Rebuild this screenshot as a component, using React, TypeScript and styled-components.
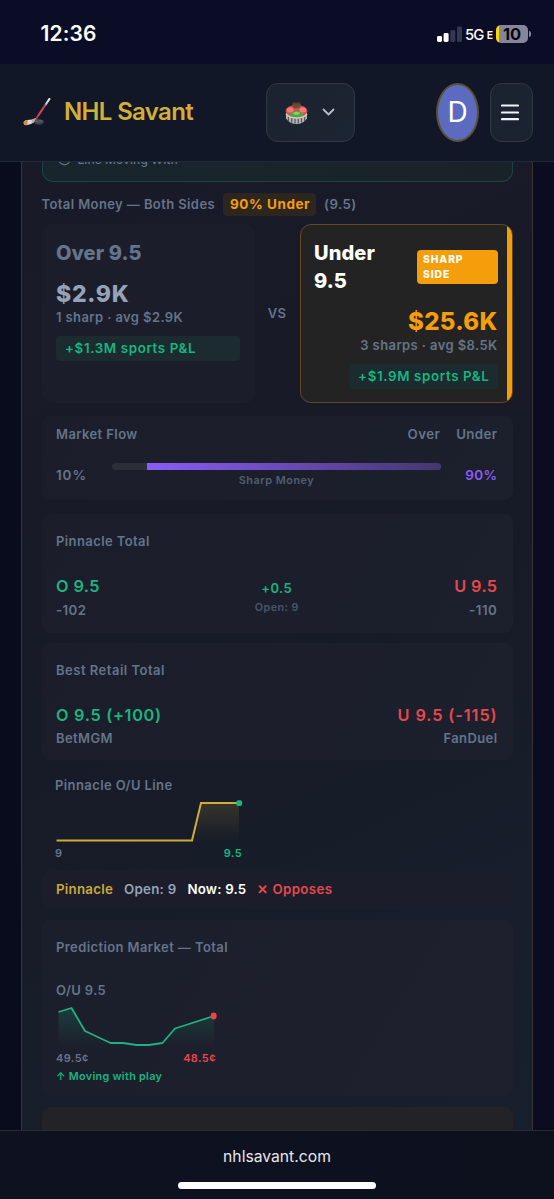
import React from "react";
import styled, { createGlobalStyle } from "styled-components";

const GlobalStyle = createGlobalStyle`
  * { box-sizing: border-box; }
  body {
    margin: 0;
    background: #090c1d;
    font-family: Inter, "Liberation Sans", sans-serif;
    color: #64748b;
  }
`;

const Screen = styled.div`
  width: 554px;
  height: 1199px;
  display: flex;
  flex-direction: column;
  overflow: hidden;
`;

const StatusBar = styled.div`
  height: 64px;
  flex: none;
  display: flex;
  justify-content: space-between;
  padding: 22px 23px 0 40.5px;
  background: #0a0d25;
`;

const StatusGroup = styled.div`
  display: flex;
  height: 24px;
  align-items: center;
`;

const Header = styled.header`
  height: 97.5px;
  flex: none;
  display: flex;
  align-items: center;
  padding: 0 21px 0 23px;
  background: #111726;
  border-bottom: 1px solid #222a38;
`;

const SportPicker = styled.button`
  width: 89px;
  height: 59px;
  margin: 0 81.5px 0 auto;
  padding: 3px 19px 0 18px;
  display: flex;
  align-items: center;
  justify-content: space-between;
  border: 1px solid #313845;
  border-radius: 12px;
  background: linear-gradient(135deg, #1b2230, #1c2533);
`;

const Avatar = styled.div`
  width: 43px;
  height: 59px;
  margin-right: 11px;
  display: flex;
  align-items: center;
  justify-content: center;
  border: 2px solid #5b5033;
  border-radius: 50%;
  background: #5c6bc0;
`;

const MenuButton = styled.button`
  width: 43px;
  height: 59px;
  padding: 0 3px 0 0;
  display: flex;
  align-items: center;
  justify-content: center;
  border: 1px solid #313845;
  border-radius: 12px;
  background: #1b2330;
`;

const Viewport = styled.main`
  height: 968px;
  flex: none;
  overflow: hidden;
  padding: 0 21px;
  background: linear-gradient(90deg, #090c1c, #0b0c20);
`;

const GameCard = styled.section`
  height: 1000px;
  padding: 0 19.5px;
  border: solid #3a362f;
  border-width: 0 1px;
  background: linear-gradient(155deg, #191a27, #171b27 50%, #18202d);
`;

const SignalBox = styled.div`
  height: 20px;
  padding-left: 15px;
  display: flex;
  align-items: flex-start;
  gap: 7px;
  overflow: hidden;
  border: 1px solid #1a4344;
  border-top: 0;
  border-radius: 0 0 11px 11px;
  background: linear-gradient(90deg, #18252d, #1a2229);
`;

const SignalIcon = styled.svg`
  flex: none;
  margin-top: -9px;
`;

const SignalText = styled.span`
  margin-top: -11px;
  font-size: 12px;
  line-height: 18px;
  font-weight: 500;
  letter-spacing: 0.05px;
`;

interface TextProps {
  $size?: number;
  $line?: number;
  $weight?: number;
  $color?: string;
  $track?: number;
  $top?: number;
}

const Text = styled.div<TextProps>`
  font-size: ${(p) => p.$size ?? 13}px;
  line-height: ${(p) => p.$line ?? 20}px;
  font-weight: ${(p) => p.$weight ?? 580};
  color: ${(p) => p.$color ?? "#64748b"};
  letter-spacing: ${(p) => p.$track ?? 0.4}px;
  margin-top: ${(p) => p.$top ?? 0}px;
  white-space: nowrap;
`;

const MoneyRow = styled.div`
  height: 23px;
  margin-top: 11px;
  display: flex;
  align-items: center;
`;

const ShareBadge = styled.span`
  height: 23px;
  margin: 0 8px;
  padding: 0 6px 0 7px;
  border-radius: 4px;
  background: #2d261f;
  color: #f59e0b;
  font-size: 13.5px;
  line-height: 22px;
  font-weight: 700;
  letter-spacing: 0.55px;
`;

const Versus = styled.div`
  height: 179px;
  margin-top: 8px;
  display: grid;
  grid-template-columns: 213px 1fr 213px;
`;

const VersusMark = styled.div`
  display: flex;
  align-items: center;
  justify-content: center;
  padding-bottom: 1px;
`;

const Side = styled.div<{ $sharp?: boolean }>`
  overflow: hidden;
  padding: 14px 14px 0 13.5px;
  display: flex;
  flex-direction: column;
  align-items: ${(p) => (p.$sharp ? "flex-end" : "stretch")};
  border: 1px solid ${(p) => (p.$sharp ? "#644820" : "#1c1f2b")};
  border-radius: 11px;
  background: ${(p) =>
    p.$sharp ? "linear-gradient(90deg, #242324 97.8%, #f59e0b 97.8%)" : "#1b1e2a"};
`;

const SideTop = styled.div`
  width: 100%;
  display: flex;
  align-items: center;
  justify-content: space-between;
`;

const SideName = styled.div<{ $color: string; $width?: number }>`
  width: ${(p) => (p.$width ? `${p.$width}px` : "auto")};
  font-size: 20px;
  line-height: 28.4px;
  font-weight: 800;
  letter-spacing: 0.1px;
  color: ${(p) => p.$color};
`;

const SharpTag = styled.div`
  width: 81px;
  height: 34px;
  padding: 2px 20px 2px 6.5px;
  border-radius: 4px;
  background: #f59e0b;
  color: #fff;
  font-size: 10.3px;
  line-height: 15px;
  font-weight: 800;
  letter-spacing: 0.9px;
`;

const Profit = styled.div`
  height: 25px;
  margin-top: 8.5px;
  padding: 0 8px 0 9px;
  border-radius: 4px;
  background: #1b2b30;
  color: #18b581;
  font-size: 13.3px;
  line-height: 25px;
  font-weight: 600;
  letter-spacing: 0.65px;
  white-space: nowrap;
`;

const Panel = styled.div<{ $height: number; $top: number; $pad?: number; $bg?: string }>`
  height: ${(p) => p.$height}px;
  margin-top: ${(p) => p.$top}px;
  padding: ${(p) => p.$pad ?? 17}px 15px 0 14.5px;
  border-radius: 9px;
  background: ${(p) => p.$bg ?? "linear-gradient(120deg, #1b1e2a, #1c202c)"};
`;

const Spread = styled.div<{ $top?: number }>`
  margin-top: ${(p) => p.$top ?? 0}px;
  display: flex;
  justify-content: space-between;
  align-items: flex-start;
`;

const Legend = styled.div`
  display: flex;
  gap: 16px;
`;

const FlowRow = styled.div`
  margin-top: 19px;
  display: grid;
  grid-template-columns: 56px 329px 1fr;
`;

const FlowTrack = styled.div`
  height: 7px;
  overflow: hidden;
  border-radius: 4px;
  background: #2c2f39;
`;

const FlowFill = styled.div`
  height: 100%;
  margin-left: 35px;
  background: linear-gradient(90deg, #8b5cf6, #43376f);
`;

const Quote = styled.div<{ $align: string }>`
  width: 33%;
  text-align: ${(p) => p.$align};
`;

const LineBlock = styled.div`
  height: 111px;
  padding: 15px 13.5px 0;
`;

const Chart = styled.svg`
  display: block;
  overflow: visible;
`;

const ChartLabels = styled.div<{ $width: number }>`
  width: ${(p) => p.$width}px;
  display: flex;
  justify-content: space-between;
`;

const Strip = styled.div`
  height: 37px;
  padding: 0 15px 1px 14.5px;
  display: flex;
  align-items: center;
  gap: 11px;
  border-radius: 9px;
  background: #1b1e2a;
`;

const BottomBar = styled.footer`
  height: 69.5px;
  flex: none;
  display: flex;
  flex-direction: column;
  align-items: center;
  border-top: 1px solid #262b35;
  background: linear-gradient(90deg, #0e1120, #0d111e);
`;

const HomeIndicator = styled.div`
  width: 198px;
  height: 7px;
  margin-top: 13px;
  border-radius: 4px;
  background: #fff;
`;

const SignalBars = () => (
  <svg width="26" height="16" viewBox="0 0 26 16">
    <rect x="0" y="10" width="5" height="6" rx="1.4" fill="#fff" />
    <rect x="6.6" y="7" width="5" height="9" rx="1.4" fill="#fff" />
    <rect x="13.3" y="4" width="5" height="12" rx="1.4" fill="#343750" />
    <rect x="20" y="0.5" width="5" height="15.5" rx="1.4" fill="#343750" />
  </svg>
);

const BatteryWrap = styled.div`
  display: flex;
  align-items: center;
  gap: 1px;
  margin-left: 3px;
`;

const BatteryBody = styled.div`
  width: 32px;
  height: 18px;
  border-radius: 5px;
  background: linear-gradient(90deg, #fbd906 3.5px, #85869a 3.5px);
  color: #05060c;
  font-size: 16.5px;
  line-height: 18px;
  font-weight: 700;
  text-align: center;
`;

const BatteryTip = styled.div`
  width: 2px;
  height: 6px;
  border-radius: 0 3px 3px 0;
  background: #85869a;
`;

const StickIcon = () => (
  <svg width="28" height="29" viewBox="0 0 28 29">
    <defs>
      <linearGradient id="shaft" x1="1" y1="0" x2="0" y2="1">
        <stop offset="0" stopColor="#e9e9ee" />
        <stop offset="0.24" stopColor="#c8c8cf" />
        <stop offset="0.32" stopColor="#b84653" />
        <stop offset="0.7" stopColor="#cf4a50" />
        <stop offset="1" stopColor="#8f3d3b" />
      </linearGradient>
    </defs>
    <ellipse cx="16" cy="24" rx="4.6" ry="2.7" fill="#3c4047" />
    <ellipse cx="16" cy="23.1" rx="4.4" ry="1.7" fill="#50555d" />
    <path d="M26.4 1 L12.6 21.5" stroke="url(#shaft)" strokeWidth="2.2" strokeLinecap="round" />
    <path
      d="M12.7 20.2 L11 24.2 Q6 27.8 2 27 Q0 26.1 1 23.3 Q3 21.6 9.4 21.6 Z"
      fill="#dedbd9"
    />
    <path d="M5 22 Q0.6 22.3 0.5 25.1 Q0.8 27.2 4.2 27 Z" fill="#d28a45" />
    <path d="M9 21.6 L12.8 20.1 L11.2 24.1 L8.5 25.7 Z" fill="#b9aaa6" />
  </svg>
);

const StadiumIcon = () => (
  <svg width="23" height="23" viewBox="0 0 23 23">
    <rect x="7.6" y="0.6" width="7.8" height="5" rx="1" fill="#56412f" />
    <path d="M1 9 V16.5 Q5 22 11.5 22 Q18 22 22 16.5 V9 Z" fill="#b5b3b2" />
    <ellipse cx="11.5" cy="9.1" rx="11" ry="6.1" fill="#d84f50" />
    <ellipse cx="5.3" cy="8" rx="3.4" ry="2.8" fill="#ef7a78" />
    <ellipse cx="17.7" cy="8" rx="3.4" ry="2.8" fill="#ef7a78" />
    <path d="M7 2.6 H16 L14.7 6.3 H8.3 Z" fill="#6d4d38" />
    <ellipse cx="11.5" cy="12.2" rx="6.6" ry="3.1" fill="#55a345" />
    <ellipse cx="11.5" cy="11.3" rx="3.2" ry="1.5" fill="#8ed057" />
    <path
      d="M3.4 14.7 V19 M6.7 16 V20.8 M10 16.5 V21.6 M13.3 16.5 V21.6 M16.5 16 V20.8 M19.7 14.7 V19"
      stroke="#55575d"
      strokeWidth="1.2"
    />
    <path d="M0.8 12 Q4 16 11.5 16 Q19 16 22.2 12" fill="none" stroke="#d5d2d0" strokeWidth="1.2" />
  </svg>
);

const Chevron = styled.svg`
  margin-bottom: 4px;
`;

const Network = styled(Text)`
  margin-left: 2px;
`;

const NetworkSuffix = styled(Text)`
  margin-left: 3.5px;
`;

const Brand = styled(Text)`
  margin-left: 13px;
`;

const FlowCaption = styled(Text)`
  text-align: center;
`;

const FlowEnd = styled(Text)`
  text-align: right;
`;

const GREEN = "#18b581";
const RED = "#e5484d";
const GOLD = "#d4af37";

export default function App() {
  return (
    <>
      <GlobalStyle />
      <Screen>
        <StatusBar>
          <StatusGroup>
            <Text $size={21} $line={24} $weight={600} $color="#fff" $track={0.1}>
              12:36
            </Text>
          </StatusGroup>
          <StatusGroup>
            <SignalBars />
            <Network $size={14.8} $line={24} $weight={550} $color="#fff" $track={-0.9} $top={1}>
              5G
            </Network>
            <NetworkSuffix $size={10.5} $line={24} $weight={600} $color="#fff" $track={-0.2} $top={4}>
              E
            </NetworkSuffix>
            <BatteryWrap>
              <BatteryBody>10</BatteryBody>
              <BatteryTip />
            </BatteryWrap>
          </StatusGroup>
        </StatusBar>

        <Header>
          <StickIcon />
          <Brand $size={24} $line={30} $weight={640} $color={GOLD} $track={-0.65}>
            NHL Savant
          </Brand>
          <SportPicker>
            <StadiumIcon />
            <Chevron width="13" height="8" viewBox="0 0 13 8">
              <path d="M1.5 1.5 L6.5 6.5 L11.5 1.5" fill="none" stroke="#b6bcc8" strokeWidth="1.8" strokeLinecap="round" strokeLinejoin="round" />
            </Chevron>
          </SportPicker>
          <Avatar>
            <Text $size={28} $line={32} $weight={400} $color="#fff" $track={0}>
              D
            </Text>
          </Avatar>
          <MenuButton>
            <svg width="18" height="17" viewBox="0 0 18 17">
              <path d="M1 1.5 H17 M1 8.5 H17 M1 15.2 H17" stroke="#f1f5f9" strokeWidth="2.2" strokeLinecap="round" />
            </svg>
          </MenuButton>
        </Header>

        <Viewport>
          <GameCard>
            <SignalBox>
              <SignalIcon width="13" height="13" viewBox="0 0 13 13">
                <circle cx="6.5" cy="6.2" r="5.6" fill="none" stroke="#64748b" strokeWidth="1.2" />
              </SignalIcon>
              <SignalText>Line Moving With</SignalText>
            </SignalBox>

            <MoneyRow>
              <Text $top={-1}>Total Money — Both Sides</Text>
              <ShareBadge>90% Under</ShareBadge>
              <Text $size={13.3} $top={-1}>(9.5)</Text>
            </MoneyRow>

            <Versus>
              <Side>
                <SideName $color="#64748b">Over 9.5</SideName>
                <Text $size={23} $line={26} $weight={800} $color="#94a3b8" $track={0.7} $top={14}>
                  $2.9K
                </Text>
                <Text $top={0.5}>1 sharp · avg $2.9K</Text>
                <Profit>+$1.3M sports P&amp;L</Profit>
              </Side>
              <VersusMark>
                <Text>VS</Text>
              </VersusMark>
              <Side $sharp>
                <SideTop>
                  <SideName $color="#fff" $width={80}>
                    Under 9.5
                  </SideName>
                  <SharpTag>SHARP SIDE</SharpTag>
                </SideTop>
                <Text $size={24} $line={26} $weight={800} $color="#f59e0b" $track={0.3} $top={13.5}>
                  $25.6K
                </Text>
                <Text $top={0.5}>3 sharps · avg $8.5K</Text>
                <Profit>+$1.9M sports P&amp;L</Profit>
              </Side>
            </Versus>

            <Panel $height={84} $top={13} $pad={8}>
              <Spread>
                <Text>Market Flow</Text>
                <Legend>
                  <Text $size={13.3}>Over</Text>
                  <Text $size={13.3}>Under</Text>
                </Legend>
              </Spread>
              <FlowRow>
                <Text $size={13.5} $weight={600} $track={0.9} $top={2.5}>10%</Text>
                <div>
                  <FlowTrack>
                    <FlowFill />
                  </FlowTrack>
                  <FlowCaption $size={10.8} $color="#525e72" $track={0.55} $line={21}>
                    Sharp Money
                  </FlowCaption>
                </div>
                <FlowEnd $size={13.5} $weight={600} $color="#8b5cf6" $top={2.5}>
                  90%
                </FlowEnd>
              </FlowRow>
            </Panel>

            <Panel $height={119} $top={14}>
              <Text>Pinnacle Total</Text>
              <Spread $top={24}>
                <Quote $align="left">
                  <Text $size={16.3} $weight={600} $color={GREEN} $line={22}>O 9.5</Text>
                  <Text $size={13.3} $top={3}>-102</Text>
                </Quote>
                <Quote $align="center">
                  <Text $weight={600} $color={GREEN} $top={3}>+0.5</Text>
                  <Text $size={10.8} $color="#475569">Open: 9</Text>
                </Quote>
                <Quote $align="right">
                  <Text $size={16.3} $weight={600} $color={RED} $line={22}>U 9.5</Text>
                  <Text $size={13.3} $track={0.6} $top={3}>-110</Text>
                </Quote>
              </Spread>
            </Panel>

            <Panel $height={117} $top={10}>
              <Text $track={0.5}>Best Retail Total</Text>
              <Spread $top={24}>
                <Quote $align="left">
                  <Text $size={16.3} $weight={600} $track={0.7} $color={GREEN} $line={22}>O 9.5 (+100)</Text>
                  <Text $top={2}>BetMGM</Text>
                </Quote>
                <Quote $align="right">
                  <Text $size={16.3} $weight={600} $track={0.9} $color={RED} $line={22}>U 9.5 (-115)</Text>
                  <Text $top={2}>FanDuel</Text>
                </Quote>
              </Spread>
            </Panel>

            <LineBlock>
              <Text>Pinnacle O/U Line</Text>
              <Chart width="188" height="48" viewBox="0 0 188 48">
                <defs>
                  <linearGradient id="goldFill" x1="0" y1="0" x2="0" y2="1">
                    <stop offset="0" stopColor={GOLD} stopOpacity="0.16" />
                    <stop offset="1" stopColor={GOLD} stopOpacity="0" />
                  </linearGradient>
                </defs>
                <path d="M137 45.5 L146 8 H184 V45.5 Z" fill="url(#goldFill)" />
                <path d="M1.5 45.5 H137 L146 8 H184" fill="none" stroke="#d0ac37" strokeWidth="2" />
                <rect x="181.3" y="5.2" width="5.8" height="5.8" rx="1.8" fill={GREEN} />
              </Chart>
              <ChartLabels $width={187}>
                <Text $size={11}>9</Text>
                <Text $size={11} $weight={600} $color={GREEN}>9.5</Text>
              </ChartLabels>
            </LineBlock>

            <Strip>
              <Text $size={13.3} $weight={600} $color="#cba83a" $track={0.25}>Pinnacle</Text>
              <Text $size={13.3} $color="#94a3b8" $track={0.25}>Open: 9</Text>
              <Text $size={13.3} $weight={600} $color="#fff" $track={0.2}>Now: 9.5</Text>
              <Text $size={13.3} $weight={600} $color={RED} $track={0.35}>✕ Opposes</Text>
            </Strip>

            <Panel $height={176} $top={12} $bg="linear-gradient(120deg, #1b1f2b, #1e202d)">
              <Text>Prediction Market — Total</Text>
              <Text $top={23}>O/U 9.5</Text>
              <Chart width="162" height="48" viewBox="0 0 162 48">
                <defs>
                  <linearGradient id="greenFill" x1="0" y1="0" x2="0" y2="1">
                    <stop offset="0" stopColor={GREEN} stopOpacity="0.2" />
                    <stop offset="1" stopColor={GREEN} stopOpacity="0" />
                  </linearGradient>
                </defs>
                <path d="M2.5 12 L15.5 8 L29 31 L54.5 43 H67 L80.5 45 H93 L106.5 43 L119 28.5 L158 16 V46 H2.5 Z" fill="url(#greenFill)" />
                <path d="M2.5 12 L15.5 8 L29 31 L54.5 43 H67 L80.5 45 H93 L106.5 43 L119 28.5 L158 16" fill="none" stroke="#20b083" strokeWidth="1.8" strokeLinejoin="round" />
                <ellipse cx="157.7" cy="16" rx="3" ry="3.4" fill="#ef4444" />
              </Chart>
              <ChartLabels $width={160}>
                <Text $size={11}>49.5¢</Text>
                <Text $size={11} $weight={600} $color={RED}>48.5¢</Text>
              </ChartLabels>
              <Text $size={10.8} $weight={600} $color={GREEN} $line={17} $track={0.3}>↑ Moving with play</Text>
            </Panel>

            <Panel $height={80} $top={11} $bg="#232227" />
          </GameCard>
        </Viewport>

        <BottomBar>
          <Text $size={15.7} $line={24} $weight={400} $color="#e6e8ee" $track={0} $top={14.5}>
            nhlsavant.com
          </Text>
          <HomeIndicator />
        </BottomBar>
      </Screen>
    </>
  );
}
